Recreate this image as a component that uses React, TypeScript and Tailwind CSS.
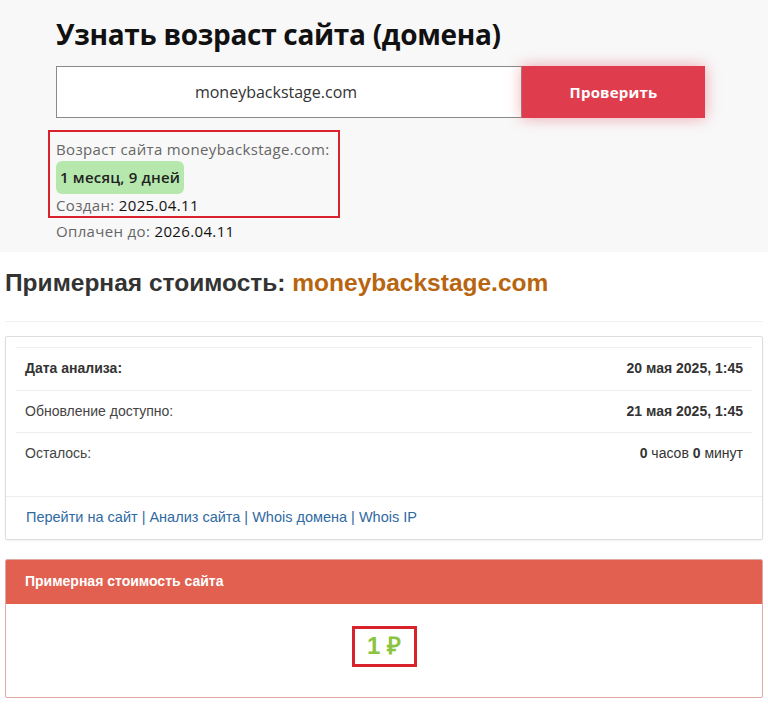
import React from 'react'

const mont = { fontFamily: '"Open Sans", "Noto Sans", sans-serif' }

function DomainAge() {
  return (
    <section className="bg-[#f8f8f8] pl-[56px] pr-[63px] pt-[17px] h-[252px]" style={mont}>
      <h1 className="text-[28px] leading-[34px] font-bold text-[#111] tracking-[-0.3px]">
        Узнать возраст сайта (домена)
      </h1>

      <div className="mt-[15px] flex h-[52px] w-[649px]">
        <div className="flex-1 flex items-center justify-center pr-[26px] bg-white border border-[#8a8a8a] text-[16px] text-[#333]">
          moneybackstage.com
        </div>
        <button className="w-[183px] bg-[#df3d4d] text-white font-bold text-[15px] tracking-[0.2px] shadow-[0_0_14px_rgba(223,61,77,0.45)]">
          Проверить
        </button>
      </div>

      <div className="mt-[12px] -ml-[8px] w-[292px] border-2 border-[#d8232c] px-[6px] pt-[6px] pb-0 text-[15px] tracking-[0.35px] text-[#666]">
        <div className="leading-[22px]">Возраст сайта moneybackstage.com:</div>
        <div className="mt-[1px] inline-flex items-center h-[33px] px-[4px] rounded-[6px] bg-[#b6e8ae] text-[#222] font-semibold text-[15px] tracking-[0.2px]">
          1 месяц, 9 дней
        </div>
        <div className="leading-[22px]">
          Создан: <span className="text-[#111]">2025.04.11</span>
        </div>
      </div>
      <div className="mt-[2px] leading-[22px] text-[15px] tracking-[0.35px] text-[#666]">
        Оплачен до: <span className="text-[#111]">2026.04.11</span>
      </div>
    </section>
  )
}

function Row({ label, value, bold }: { label: string; value: React.ReactNode; bold?: boolean }) {
  return (
    <div className="flex items-center justify-between h-[42.5px] px-[9px] border-t border-[#eeeeee]">
      <span className={bold ? 'font-bold text-[#333]' : 'text-[#444]'}>{label}</span>
      <span className="text-[#333]">{value}</span>
    </div>
  )
}

function Estimate() {
  return (
    <section className="bg-white px-[5px]" style={{ fontFamily: '"Liberation Sans", Arial, sans-serif' }}>
      <h2 className="pt-[16px] h-[70px] text-[24.5px] font-bold text-[#333] leading-[30px] border-b border-[#f2f2f2]">
        Примерная стоимость: <span className="text-[#b8650f]">moneybackstage.com</span>
      </h2>

      <div className="mt-[14px] border border-[#dddddd] rounded-[2px] shadow-[0_1px_2px_rgba(0,0,0,0.06)] text-[14px]">
        <div className="px-[10px] pt-[10px] pb-[21px]">
          <Row label="Дата анализа:" bold value={<b>20 мая 2025, 1:45</b>} />
          <Row label="Обновление доступно:" value={<b>21 мая 2025, 1:45</b>} />
          <Row
            label="Осталось:"
            value={
              <>
                <b>0</b> часов <b>0</b> минут
              </>
            }
          />
        </div>
        <div className="border-t border-[#eeeeee] h-[43px] flex items-center px-[20px] text-[#2f6aa3] text-[14.5px]">
          <a>Перейти на сайт</a>
          <span className="mx-[4px]">|</span>
          <a>Анализ сайта</a>
          <span className="mx-[4px]">|</span>
          <a>Whois домена</a>
          <span className="mx-[4px]">|</span>
          <a>Whois IP</a>
        </div>
      </div>

      <div className="mt-[19px] border border-[#e0a9a4] rounded-[2px] overflow-hidden">
        <div className="h-[44px] bg-[#e2604f] flex items-center px-[19px] text-white font-bold text-[14px]">
          Примерная стоимость сайта
        </div>
        <div className="h-[93px] flex justify-center pt-[22px]">
          <div className="border-[3px] border-[#d8232c] w-[65px] h-[41px] flex items-center justify-center text-[24px] font-bold text-[#8cc43f]">
            1 ₽
          </div>
        </div>
      </div>
    </section>
  )
}

export default function App() {
  return (
    <div className="w-[768px] h-[708px] overflow-hidden bg-white">
      <DomainAge />
      <Estimate />
    </div>
  )
}
